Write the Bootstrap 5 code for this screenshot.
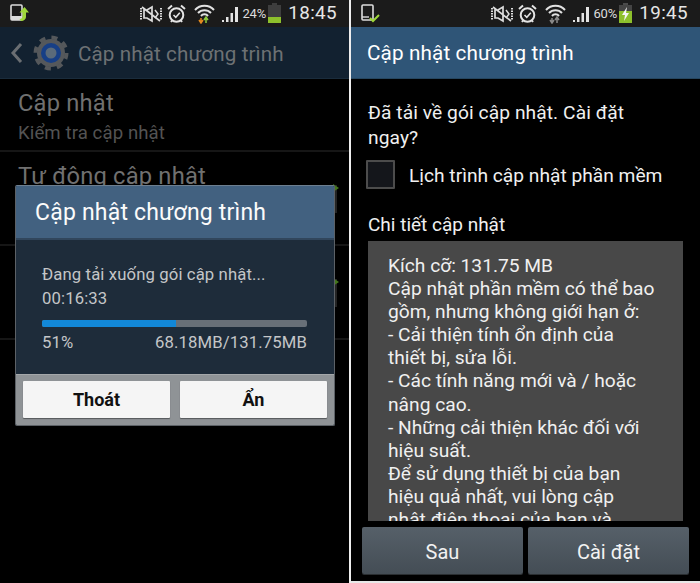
<!DOCTYPE html>
<html lang="vi">
<head>
<meta charset="utf-8">
<title>Cập nhật chương trình</title>
<link href="https://cdn.jsdelivr.net/npm/bootstrap@5.3.0/dist/css/bootstrap.min.css" rel="stylesheet">
<style>
html,body{margin:0;background:#000;overflow:hidden}
body{width:700px;height:583px;font-family:Roboto,"Noto Sans",sans-serif}
.stage{width:700px;height:583px}
.phone{width:349px;height:583px;background:#000;position:relative;overflow:hidden;flex:none}
.phone-r{width:349px;border-bottom:2px solid #e8e8e8}
.split{width:2px;background:#eee;flex:none}
.sbar{height:27px;background:#1b1b1b;color:#ddd;padding:0 12px 0 10px}
.clock{font-size:18.8px;letter-spacing:.4px;line-height:27px;color:#e6e6e6;margin-left:6px}
.pct{font-size:13px;color:#ddd;line-height:27px;margin:0 1px 0 3px;letter-spacing:-.1px}
.mw{margin-right:6px}
.abar{height:52px;background:#122130;border-bottom:1px solid #1a2c3c;padding-left:10px;gap:9px}
.abar-t{font-size:20.6px;color:#6d7174;letter-spacing:.12px;padding-top:3px}
.rowitem{padding:0 12px 0 18px;border-bottom:2px solid #161616}
.it1{height:73px;padding-top:9px}
.t1{font-size:23.7px;color:#707070;line-height:30px;letter-spacing:.2px}
.t2{font-size:18.6px;color:#535353;line-height:31px;letter-spacing:.1px}
.it2{height:94px;padding-top:9px}
.minibox{width:28px;height:28px;border:2px solid #242424;background:#0c0c0c;position:relative;flex:none}
.minibox svg{position:absolute;right:-4px;top:-3px}
.dlg{position:absolute;left:15px;top:185px;width:320px;height:241px;background:#1e2c3a;border:1px solid #5c6166;border-top-color:#6d7f90;border-radius:2px;overflow:hidden}
.dlg-h{height:54px;background:#426180;border-bottom:2px solid #31465c;padding:2px 0 0 19px;color:#fbfbfb;font-size:23px;letter-spacing:.2px}
.dlg-b{height:134px;padding:23px 27px 0 26px;color:#c4c6c8;font-size:16.7px;line-height:24px;letter-spacing:.12px}
.ptrack{height:7px;background:#687078;border-radius:2px;margin:9px 0 4px;overflow:hidden}
.pfill{height:100%;background:#1288d8}
.dlg-f{height:51px;background:#8f9396;padding:6px 7px 7px;gap:10px;border-top:1px solid #a4a7a9}
.dbtn{flex:1;background:#f5f5f5;border:0;border-radius:1px;color:#111;font-weight:700;font-size:18px;box-shadow:0 1px 1px #55585a;padding:0}
.tbar{height:52px;background:#2f5577;border-bottom:1px solid #26465f;padding:3px 0 0 16px;color:#fff;font-size:20.7px;letter-spacing:.12px}
.ctn{padding:0 17px;color:#f0f0f0;font-size:19.2px}
.ask{line-height:25px;margin-top:21px;width:300px;letter-spacing:.08px}
.chkline{margin-top:9px;margin-left:-2px;gap:14px;height:30px}
.chk{width:29px;height:29px;background:#14161b;border:2px solid #4c4c4c;border-radius:1px;flex:none}
.chk-l{padding-top:4px}
.dt{margin-top:24px;line-height:24px;font-size:19px}
.scrollbox{height:280px;margin-top:4px;background:#484848;padding:13px 0 0 20px;overflow:hidden;color:#f0f0f0;font-size:19.2px;line-height:23.1px;width:315px;white-space:nowrap}
.ftr{position:absolute;left:11px;right:11px;top:527px;height:47px;gap:5px}
.gbtn{flex:1;border:0;border-radius:2px;background:linear-gradient(#566069,#444d55);color:#f2f2f2;font-size:20px;padding:3px 0 0;box-shadow:0 1px 0 #2a2e31}
</style>
</head>
<body>
<div class="stage d-flex">
  <section class="phone">
    <div class="sbar d-flex align-items-center">
      <svg width="20" height="19" viewBox="0 0 20 19"><rect x="1" y="1" width="11" height="15" rx="1" fill="none" stroke="#ddd" stroke-width="1.6"/><rect x="1" y="12" width="11" height="4" fill="#ddd"/><path d="M14.500 3l4.500 5.500h-3V13c0 2-2 4-5 4l-1.500-2c2 0 3-1 3-2.500V8.500H9.500z" fill="#9fd83a"/></svg>
      <div class="ms-auto d-flex align-items-center">
        <svg class="me-1" width="24" height="18" viewBox="0 0 24 18"><path d="M2 3v12M22 3v12" stroke="#ddd" stroke-width="2" stroke-dasharray="1.5 1"/><path d="M5 5h3l5-3v14l-5-3H5zM3 2l18 14" fill="none" stroke="#ddd" stroke-width="1.7"/><path d="M16 5l3 4-3 4" fill="none" stroke="#ddd" stroke-width="1.5"/></svg>
        <svg class="me-2" width="19" height="20" viewBox="0 0 19 20"><circle cx="9.500" cy="11" r="6.800" fill="none" stroke="#e4e4e4" stroke-width="2"/><path d="M6.500 11l2.300 2.300 4-4.500" fill="none" stroke="#e4e4e4" stroke-width="1.600"/><path d="M1 5l4-3.500M18 5l-4-3.500M4 18l1.500-2M15 18l-1.500-2" stroke="#e4e4e4" stroke-width="2"/></svg>
        <svg class="mw" width="21" height="21" viewBox="0 0 21 21"><path d="M1 7a13 13 0 0 1 19 0M4 10a9 9 0 0 1 13 0M7 13a4.500 4.500 0 0 1 7 0" fill="none" stroke="#e2e2e2" stroke-width="2"/><path d="M7 15v4M5 17l2 3 2-3" fill="none" stroke="#e58a1f" stroke-width="1.500"/><path d="M12 20v-5M10 17l2-3 2 3" fill="none" stroke="#8fcc3c" stroke-width="1.500"/></svg>
        <svg width="18" height="18" viewBox="0 0 18 18"><path d="M1 17v-2h2v2zM5 17v-5h2.500v5zM9.500 17V8H12v9zM14 17V2h3v15z" fill="#e4e4e4"/></svg>
        <span class="pct">24%</span>
        <svg width="15" height="21" viewBox="0 0 15 21"><rect x="5" y="0" width="5" height="2" fill="#3d3d3d"/><rect x="1" y="2" width="13" height="18" fill="#3e3e3e"/><rect x="1" y="14" width="13" height="6" fill="#8dc02c"/></svg>
        <span class="clock">18:45</span>
      </div>
    </div>
    <div class="abar d-flex align-items-center">
      <svg width="14" height="22" viewBox="0 0 14 22"><path d="M11 2L3 11l8 9" fill="none" stroke="#6a6e72" stroke-width="3"/></svg>
      <svg width="36" height="36" viewBox="0 0 36 36"><circle cx="18" cy="18" r="15.500" fill="none" stroke="#55585b" stroke-width="4" stroke-dasharray="6 6.170"/><circle cx="18" cy="18" r="14" fill="#55585b"/><circle cx="18" cy="18" r="10" fill="#173f86"/><circle cx="18" cy="18" r="5.500" fill="#5a6a7a"/></svg>
      <span class="abar-t">Cập nhật chương trình</span>
    </div>
    <div class="rowitem it1">
      <div class="t1">Cập nhật</div>
      <div class="t2">Kiểm tra cập nhật</div>
    </div>
    <div class="rowitem it2 d-flex justify-content-between">
      <div class="t1">Tự động cập nhật</div>
      <div class="minibox mt-4"><svg width="6" height="8" viewBox="0 0 6 8"><path d="M0 0l6 4-6 4z" fill="#44761c"/></svg></div>
    </div>
    <div class="rowitem it2 d-flex justify-content-end">
      <div class="minibox mt-4"><svg width="6" height="8" viewBox="0 0 6 8"><path d="M0 0l6 4-6 4z" fill="#44761c"/></svg></div>
    </div>
    <div class="dlg">
      <div class="dlg-h d-flex align-items-center">Cập nhật chương trình</div>
      <div class="dlg-b">
        <div>Đang tải xuống gói cập nhật...</div>
        <div>00:16:33</div>
        <div class="ptrack"><div class="pfill" style="width:50.5%"></div></div>
        <div class="d-flex justify-content-between"><span>51%</span><span>68.18MB/131.75MB</span></div>
      </div>
      <div class="dlg-f d-flex">
        <button class="dbtn" type="button">Thoát</button>
        <button class="dbtn" type="button">Ẩn</button>
      </div>
    </div>
  </section>
  <div class="split"></div>
  <section class="phone phone-r">
    <div class="sbar d-flex align-items-center">
      <svg width="20" height="19" viewBox="0 0 20 19"><rect x="1" y="1" width="11" height="15" rx="1" fill="none" stroke="#ddd" stroke-width="1.600"/><path d="M1 13h7" stroke="#ddd" stroke-width="1.400"/><path d="M9 14l3 3 6-6" fill="none" stroke="#9fd83a" stroke-width="2"/></svg>
      <div class="ms-auto d-flex align-items-center">
        <svg class="me-1" width="24" height="18" viewBox="0 0 24 18"><path d="M2 3v12M22 3v12" stroke="#ddd" stroke-width="2" stroke-dasharray="1.500 1"/><path d="M5 5h3l5-3v14l-5-3H5zM3 2l18 14" fill="none" stroke="#ddd" stroke-width="1.700"/><path d="M16 5l3 4-3 4" fill="none" stroke="#ddd" stroke-width="1.500"/></svg>
        <svg class="me-2" width="19" height="20" viewBox="0 0 19 20"><circle cx="9.500" cy="11" r="6.800" fill="none" stroke="#e4e4e4" stroke-width="2"/><path d="M6.500 11l2.300 2.300 4-4.500" fill="none" stroke="#e4e4e4" stroke-width="1.600"/><path d="M1 5l4-3.500M18 5l-4-3.500M4 18l1.500-2M15 18l-1.500-2" stroke="#e4e4e4" stroke-width="2"/></svg>
        <svg class="mw" width="21" height="21" viewBox="0 0 21 21"><path d="M1 7a13 13 0 0 1 19 0M4 10a9 9 0 0 1 13 0M7 13a4.500 4.500 0 0 1 7 0" fill="none" stroke="#e2e2e2" stroke-width="2"/><path d="M7 15v4M5 17l2 3 2-3" fill="none" stroke="#8a8a8a" stroke-width="1.500"/><path d="M12 20v-5M10 17l2-3 2 3" fill="none" stroke="#8a8a8a" stroke-width="1.500"/></svg>
        <svg width="18" height="18" viewBox="0 0 18 18"><path d="M1 17v-2h2v2zM5 17v-5h2.500v5zM9.500 17V8H12v9zM14 17V2h3v15z" fill="#e4e4e4"/></svg>
        <span class="pct">60%</span>
        <svg width="15" height="21" viewBox="0 0 15 21"><rect x="5" y="0" width="5" height="2" fill="#4a4a4a"/><rect x="1" y="2" width="13" height="18" fill="#444"/><rect x="1" y="8" width="13" height="12" fill="#8dc02c"/><path d="M9 4L4 12h3l-1 6 5-8H8z" fill="#f4f4f4"/></svg>
        <span class="clock">19:45</span>
      </div>
    </div>
    <div class="tbar d-flex align-items-center">Cập nhật chương trình</div>
    <div class="ctn">
      <div class="ask">Đã tải về gói cập nhật. Cài đặt ngay?</div>
      <div class="chkline d-flex align-items-center"><span class="chk"></span><span class="chk-l">Lịch trình cập nhật phần mềm</span></div>
      <div class="dt">Chi tiết cập nhật</div>
      <div class="scrollbox">Kích cỡ: 131.75 MB<br>Cập nhật phần mềm có thể bao<br>gồm, nhưng không giới hạn ở:<br>- Cải thiện tính ổn định của<br>thiết bị, sửa lỗi.<br>- Các tính năng mới và / hoặc<br>nâng cao.<br>- Những cải thiện khác đối với<br>hiệu suất.<br>Để sử dụng thiết bị của bạn<br>hiệu quả nhất, vui lòng cập<br>nhật điện thoại của bạn và</div>
    </div>
    <div class="ftr d-flex">
      <button class="gbtn" type="button">Sau</button>
      <button class="gbtn" type="button">Cài đặt</button>
    </div>
  </section>
</div>
<script src="https://cdn.jsdelivr.net/npm/bootstrap@5.3.0/dist/js/bootstrap.bundle.min.js"></script>
</body>
</html>
